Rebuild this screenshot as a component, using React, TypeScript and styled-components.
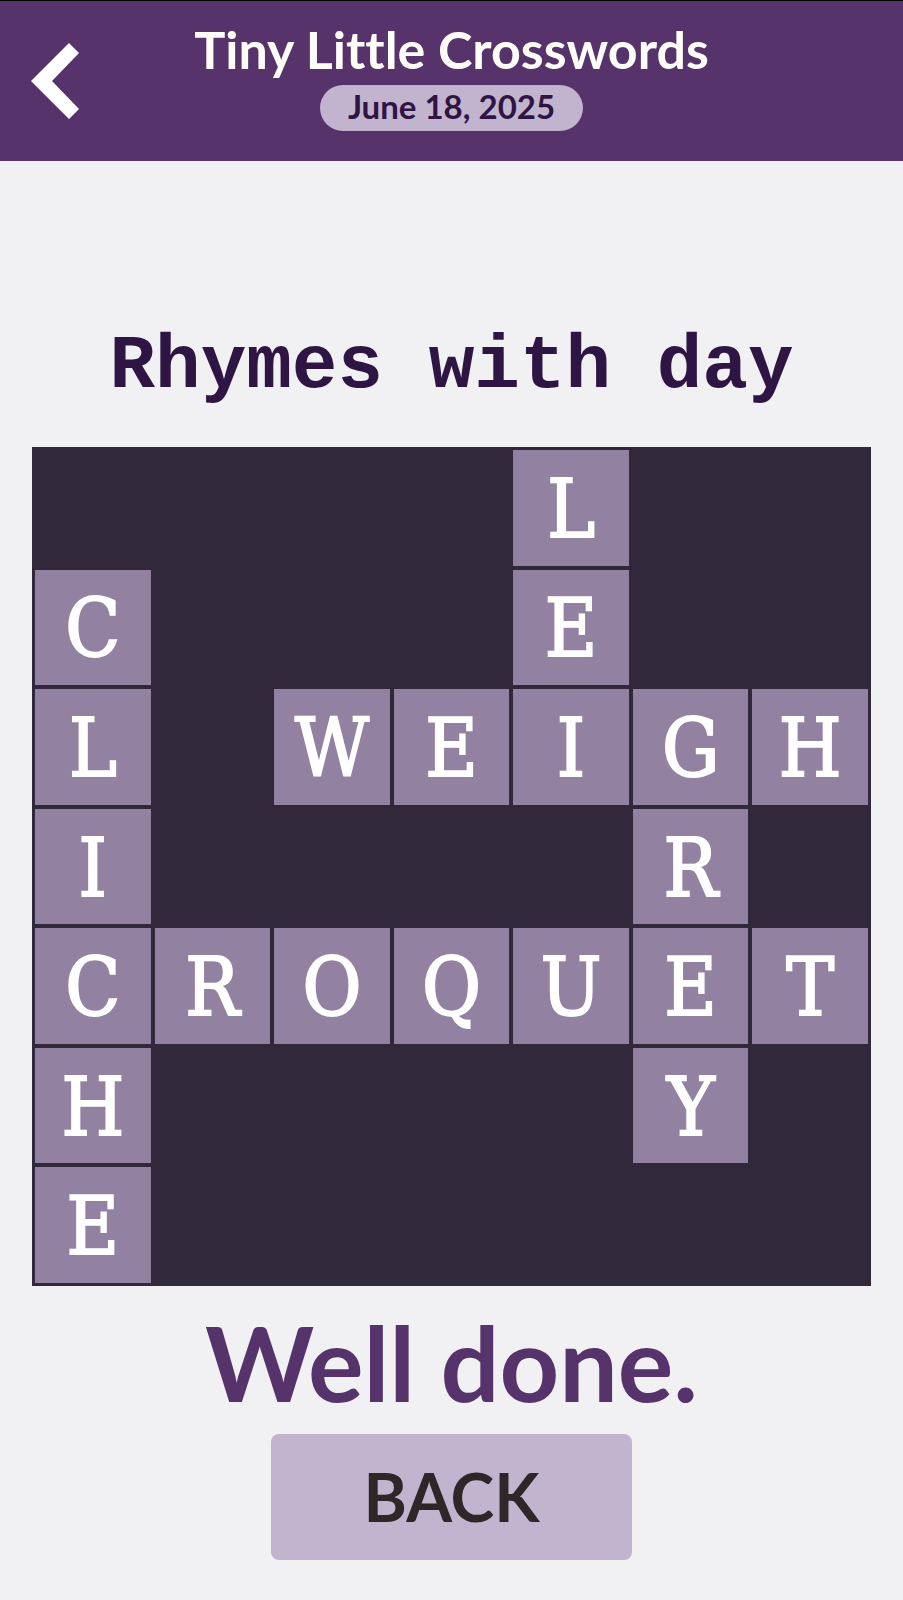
import React from 'react';
import styled, { createGlobalStyle } from 'styled-components';

const GlobalStyle = createGlobalStyle`
  * { box-sizing: border-box; }
  body { margin: 0; background: #f1f1f4; font-family: Lato, sans-serif; }
`;
const Page = styled.div`
  min-height: 100vh;
  display: flex;
  flex-direction: column;
`;
const Header = styled.header`
  display: grid;
  grid-template-columns: 96px 1fr 96px;
  height: 161px;
  border-top: 1px solid #000;
  background: #56346b;
`;
const IconButton = styled.button`
  display: flex;
  align-items: center;
  justify-content: flex-end;
  padding: 0 16px 0 0;
  border: 0;
  background: none;
  cursor: pointer;
`;
const Heading = styled.div`
  display: flex;
  flex-direction: column;
  align-items: center;
  padding-top: 16px;
`;
const Title = styled.h1`
  margin: 0 0 4px;
  color: #fffdf8;
  font: 700 52px/64px Lato, sans-serif;
  font-variant-ligatures: none;
  white-space: nowrap;
`;
const DateBadge = styled.time`
  padding: 0 28px 4px;
  border-radius: 23px;
  background: #c2b3ce;
  color: #2f1543;
  font: 700 33px/42px Lato, sans-serif;
  white-space: nowrap;
`;
const Main = styled.main`
  display: flex;
  flex-direction: column;
  align-items: center;
  padding: 166px 32px 40px;
`;
const Clue = styled.h2`
  margin: 0;
  color: #2f1543;
  font: 700 76px/80px "Liberation Mono", monospace;
`;
const Board = styled.div`
  display: grid;
  grid-template-columns: repeat(7, 1fr);
  gap: 4px;
  width: 100%;
  margin-top: 40px;
  padding: 3px;
  background: #32283c;
`;
const Cell = styled.div<{ $filled: boolean }>`
  display: flex;
  align-items: center;
  justify-content: center;
  min-width: 0;
  padding-top: 4px;
  aspect-ratio: 1;
  background: ${(p) => (p.$filled ? '#9281a1' : 'transparent')};
  color: #fff;
  font: 400 80px/96px "DejaVu Serif Condensed", "DejaVu Serif", serif;
  -webkit-text-stroke: 2px #fff;
`;
const Result = styled.p`
  margin: 12px 0 8px;
  color: #56346b;
  font: 700 104px/128px Lato, sans-serif;
`;
const BackButton = styled.button`
  width: 361px;
  height: 126px;
  border: 0;
  border-radius: 8px;
  background: #c2b3ce;
  color: #2f2628;
  font: 700 66px/80px Lato, sans-serif;
  cursor: pointer;
`;

const rows = ['....L..', 'C...E..', 'L.WEIGH', 'I....R.', 'CROQUET', 'H....Y.', 'E......'];

export default function App() {
  return (
    <Page>
      <GlobalStyle />
      <Header>
        <IconButton aria-label="Go back">
          <svg width="49" height="76" viewBox="0 0 49 76" aria-hidden="true">
            <path d="M38 0 L48 10 L21 38 L48 66 L38 76 L0 38 Z" fill="#fff" />
          </svg>
        </IconButton>
        <Heading>
          <Title>Tiny Little Crosswords</Title>
          <DateBadge dateTime="2025-06-18">June 18, 2025</DateBadge>
        </Heading>
      </Header>
      <Main>
        <Clue>Rhymes with day</Clue>
        <Board>
          {rows.flatMap((row, y) =>
            row.split('').map((c, x) => (
              <Cell key={`${x}-${y}`} $filled={c !== '.'}>{c === '.' ? '' : c}</Cell>
            ))
          )}
        </Board>
        <Result>Well done.</Result>
        <BackButton>BACK</BackButton>
      </Main>
    </Page>
  );
}
